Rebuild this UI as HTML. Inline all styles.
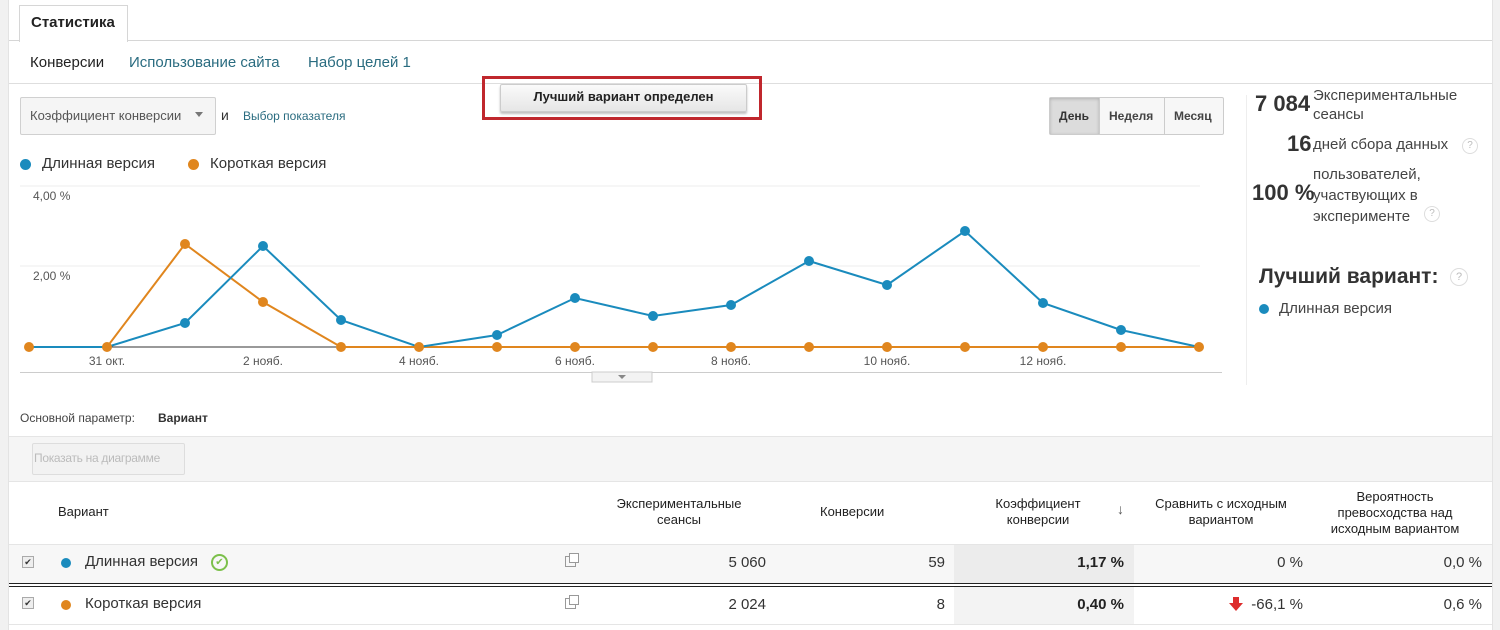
<!DOCTYPE html>
<html><head><meta charset="utf-8"><style>
body{margin:0;width:1500px;height:630px;overflow:hidden;background:#fff;font-family:"Liberation Sans",Arial,sans-serif;color:#333;position:relative}
.a{position:absolute;white-space:nowrap}
.n{display:inline-block}
</style></head><body>
<div class="a" style="left:0;top:0;width:8px;height:630px;background:#f1f1f1;border-right:1px solid #e3e3e3"></div>
<div class="a" style="left:1492px;top:0;width:8px;height:630px;background:#f1f1f1;border-left:1px solid #e3e3e3"></div>
<div class="a" style="left:9px;top:40px;width:1483px;height:1px;background:#d6d6d6"></div>
<div class="a" style="left:19px;top:5px;width:107px;height:36px;background:#fff;border:1px solid #d6d6d6;border-bottom:none"></div>
<div class="a" style="left:31px;top:14px;font-size:15px;font-weight:bold;color:#222">Статистика</div>
<div class="a" style="left:30px;top:54px;font-size:15px;color:#222">Конверсии</div>
<div class="a" style="left:129px;top:54px;font-size:15px;color:#2a6c80">Использование сайта</div>
<div class="a" style="left:308px;top:54px;font-size:15px;color:#2a6c80">Набор целей 1</div>
<div class="a" style="left:9px;top:83px;width:1483px;height:1px;background:#dedede"></div>
<div class="a" style="left:482px;top:76px;width:274px;height:38px;border:3px solid #c0272d"></div>
<div class="a" style="left:500px;top:84px;width:245px;height:26px;background:linear-gradient(#fafafa,#e6e6e6);border:1px solid #ccc;border-radius:2px;box-shadow:0 2px 2px rgba(0,0,0,.25);text-align:center;line-height:24px;font-size:13px;font-weight:bold;color:#222">Лучший вариант определен</div>
<div class="a" style="left:20px;top:97px;width:194px;height:36px;border:1px solid #d0d0d0;border-radius:2px;background:#f5f5f5"></div>
<div class="a" style="left:30px;top:108px;font-size:13px;color:#555">Коэффициент конверсии</div>
<div class="a" style="left:195px;top:112px;width:0;height:0;border-left:4px solid transparent;border-right:4px solid transparent;border-top:5px solid #777"></div>
<div class="a" style="left:221px;top:107px;font-size:14px;color:#333">и</div>
<div class="a" style="left:243px;top:109px;font-size:12px;color:#2a6c80">Выбор показателя</div>
<div class="a" style="left:1049px;top:97px;width:173px;height:36px;border:1px solid #ccc;border-radius:2px;background:#f7f7f7"></div>
<div class="a" style="left:1050px;top:98px;width:49px;height:36px;background:#dcdcdc;box-shadow:inset 0 1px 3px rgba(0,0,0,.2)"></div>
<div class="a" style="left:1099px;top:98px;width:1px;height:36px;background:#ccc"></div>
<div class="a" style="left:1164px;top:98px;width:1px;height:36px;background:#ccc"></div>
<div class="a" style="left:1059px;top:109px;font-size:12px;font-weight:bold;color:#333">День</div>
<div class="a" style="left:1109px;top:109px;font-size:12px;font-weight:bold;color:#444">Неделя</div>
<div class="a" style="left:1174px;top:109px;font-size:12px;font-weight:bold;color:#444">Месяц</div>
<div class="a" style="left:20px;top:159px;width:11px;height:11px;border-radius:50%;background:#1a8bbd"></div>
<div class="a" style="left:42px;top:155px;font-size:15px;color:#333">Длинная версия</div>
<div class="a" style="left:188px;top:159px;width:11px;height:11px;border-radius:50%;background:#e0861e"></div>
<div class="a" style="left:210px;top:155px;font-size:15px;color:#333">Короткая версия</div>
<svg class="a" style="left:0;top:180px" width="1240" height="205" viewBox="0 180 1240 205">
<line x1="20" y1="186" x2="1200" y2="186" stroke="#eee"/>
<line x1="20" y1="266" x2="1200" y2="266" stroke="#eee"/>
<line x1="20" y1="372.5" x2="1222" y2="372.5" stroke="#ccc"/>
<line x1="29" y1="347" x2="1199" y2="347" stroke="#333" stroke-width="1"/>
<text x="33" y="200" font-size="12" fill="#555" font-family="Liberation Sans">4,00 %</text>
<text x="33" y="280" font-size="12" fill="#555" font-family="Liberation Sans">2,00 %</text>
<g font-size="12" fill="#555" font-family="Liberation Sans" text-anchor="middle">
<text x="107" y="365">31 окт.</text><text x="263" y="365">2 нояб.</text><text x="419" y="365">4 нояб.</text><text x="575" y="365">6 нояб.</text><text x="731" y="365">8 нояб.</text><text x="887" y="365">10 нояб.</text><text x="1043" y="365">12 нояб.</text></g>
<polyline fill="none" stroke="#e0861e" stroke-width="2" points="29,347 107,347 185,244 263,302 341,347 419,347 497,347 575,347 653,347 731,347 809,347 887,347 965,347 1043,347 1121,347 1199,347"/>
<polyline fill="none" stroke="#1a8bbd" stroke-width="2" points="29,347 107,347 185,323 263,246 341,320 419,347 497,335 575,298 653,316 731,305 809,261 887,285 965,231 1043,303 1121,330 1199,347"/>
<g fill="#e0861e"><circle cx="29" cy="347" r="5"/><circle cx="107" cy="347" r="5"/><circle cx="185" cy="244" r="5"/><circle cx="263" cy="302" r="5"/><circle cx="341" cy="347" r="5"/><circle cx="419" cy="347" r="5"/><circle cx="497" cy="347" r="5"/><circle cx="575" cy="347" r="5"/><circle cx="653" cy="347" r="5"/><circle cx="731" cy="347" r="5"/><circle cx="809" cy="347" r="5"/><circle cx="887" cy="347" r="5"/><circle cx="965" cy="347" r="5"/><circle cx="1043" cy="347" r="5"/><circle cx="1121" cy="347" r="5"/><circle cx="1199" cy="347" r="5"/></g>
<g fill="#1a8bbd"><circle cx="185" cy="323" r="5"/><circle cx="263" cy="246" r="5"/><circle cx="341" cy="320" r="5"/><circle cx="497" cy="335" r="5"/><circle cx="575" cy="298" r="5"/><circle cx="653" cy="316" r="5"/><circle cx="731" cy="305" r="5"/><circle cx="809" cy="261" r="5"/><circle cx="887" cy="285" r="5"/><circle cx="965" cy="231" r="5"/><circle cx="1043" cy="303" r="5"/><circle cx="1121" cy="330" r="5"/></g>
<rect x="592" y="372" width="60" height="10" fill="#f3f3f3" stroke="#ccc"/>
<path d="M618 375 L626 375 L622 379 Z" fill="#888"/>
</svg>
<div class="a" style="left:1246px;top:95px;width:1px;height:290px;background:#eee"></div>
<div class="a" style="left:1255px;top:91px;font-size:22px;font-weight:bold;color:#333">7 084</div>
<div class="a" style="left:1313px;top:86px;font-size:15px;line-height:19px;color:#444">Экспериментальные<br>сеансы</div>
<div class="a" style="left:1287px;top:131px;font-size:22px;font-weight:bold;color:#333">16</div>
<div class="a" style="left:1313px;top:136px;font-size:15px;color:#444">дней сбора данных</div>
<div class="a" style="left:1462px;top:138px;width:14px;height:14px;border:1px solid #ddd;border-radius:50%;font-size:10px;color:#bbb;text-align:center;line-height:14px">?</div>
<div class="a" style="left:1252px;top:180px;font-size:22px;font-weight:bold;color:#333">100 %</div>
<div class="a" style="left:1313px;top:164px;font-size:15px;line-height:21px;color:#444">пользователей,<br>участвующих в<br>эксперименте</div>
<div class="a" style="left:1424px;top:206px;width:14px;height:14px;border:1px solid #ddd;border-radius:50%;font-size:10px;color:#bbb;text-align:center;line-height:14px">?</div>
<div class="a" style="left:1259px;top:265px;font-size:21px;font-weight:bold;color:#333">Лучший вариант:</div>
<div class="a" style="left:1450px;top:268px;width:16px;height:16px;border:1px solid #ddd;border-radius:50%;font-size:11px;color:#bbb;text-align:center;line-height:16px">?</div>
<div class="a" style="left:1259px;top:304px;width:10px;height:10px;border-radius:50%;background:#1a8bbd"></div>
<div class="a" style="left:1279px;top:300px;font-size:15px;color:#444">Длинная версия</div>
<div class="a" style="left:20px;top:411px;font-size:12px;color:#444">Основной параметр:</div>
<div class="a" style="left:158px;top:411px;font-size:12px;font-weight:bold;color:#333">Вариант</div>
<div class="a" style="left:9px;top:436px;width:1483px;height:44px;background:#f5f5f5;border-top:1px solid #e5e5e5;border-bottom:1px solid #e5e5e5"></div>
<div class="a" style="left:32px;top:443px;width:151px;height:30px;border:1px solid #ddd;border-radius:2px;background:#f2f2f2"></div>
<div class="a" style="left:34px;top:451px;font-size:12px;color:#bbb;letter-spacing:-.3px">Показать на диаграмме</div>
<div class="a" style="left:9px;top:544px;width:1483px;height:1px;background:#e5e5e5"></div>
<div class="a" style="left:58px;top:504px;font-size:13px;color:#222">Вариант</div>
<div class="a" style="left:598px;top:496px;width:162px;text-align:center;font-size:13px;line-height:16px;color:#222">Экспериментальные<br>сеансы</div>
<div class="a" style="left:820px;top:504px;font-size:13px;color:#222">Конверсии</div>
<div class="a" style="left:978px;top:496px;width:120px;text-align:center;font-size:13px;line-height:16px;color:#222">Коэффициент<br>конверсии</div>
<div class="a" style="left:1117px;top:501px;font-size:14px;color:#555">↓</div>
<div class="a" style="left:1140px;top:496px;width:162px;text-align:center;font-size:13px;line-height:16px;color:#222">Сравнить с исходным<br>вариантом</div>
<div class="a" style="left:1315px;top:489px;width:160px;text-align:center;font-size:13px;line-height:16px;color:#222">Вероятность<br>превосходства над<br>исходным вариантом</div>
<div class="a" style="left:9px;top:545px;width:1483px;height:38px;background:#f7f7f7"></div>
<div class="a" style="left:954px;top:545px;width:180px;height:38px;background:#ececec"></div>
<div class="a" style="left:9px;top:583px;width:1483px;height:1px;background:#222"></div>
<div class="a" style="left:9px;top:586px;width:1483px;height:1px;background:#222"></div>
<div class="a" style="left:954px;top:587px;width:180px;height:37px;background:#f3f3f3"></div>
<div class="a" style="left:9px;top:624px;width:1483px;height:1px;background:#e5e5e5"></div>
<div class="a" style="left:22px;top:556px;width:10px;height:10px;border:1px solid #aaa;background:#eee;font-size:9px;line-height:10px;text-align:center">✔</div>
<div class="a" style="left:22px;top:597px;width:10px;height:10px;border:1px solid #aaa;background:#eee;font-size:9px;line-height:10px;text-align:center">✔</div>
<div class="a" style="left:61px;top:558px;width:10px;height:10px;border-radius:50%;background:#1a8bbd"></div>
<div class="a" style="left:61px;top:600px;width:10px;height:10px;border-radius:50%;background:#e0861e"></div>
<div class="a" style="left:85px;top:553px;font-size:15px;color:#333">Длинная версия</div>
<div class="a" style="left:211px;top:554px;width:13px;height:13px;border:2px solid #7cc04b;border-radius:50%;color:#7cc04b;font-size:10px;line-height:13px;text-align:center">✔</div>
<div class="a" style="left:85px;top:595px;font-size:15px;color:#333">Короткая версия</div>
<div class="a" style="left:565px;top:556px;width:9px;height:9px;border:1px solid #999"></div>
<div class="a" style="left:569px;top:553px;width:8px;height:8px;border:1px solid #999;background:#fff"></div>
<div class="a" style="left:565px;top:598px;width:9px;height:9px;border:1px solid #999"></div>
<div class="a" style="left:569px;top:595px;width:8px;height:8px;border:1px solid #999;background:#fff"></div>
<div class="a" style="left:700px;top:554px;width:66px;text-align:right;font-size:15px;color:#333">5 060</div>
<div class="a" style="left:700px;top:596px;width:66px;text-align:right;font-size:15px;color:#333">2 024</div>
<div class="a" style="left:880px;top:554px;width:65px;text-align:right;font-size:15px;color:#333">59</div>
<div class="a" style="left:880px;top:596px;width:65px;text-align:right;font-size:15px;color:#333">8</div>
<div class="a" style="left:1040px;top:554px;width:84px;text-align:right;font-size:15px;font-weight:bold;color:#222">1,17 %</div>
<div class="a" style="left:1040px;top:596px;width:84px;text-align:right;font-size:15px;font-weight:bold;color:#222">0,40 %</div>
<div class="a" style="left:1220px;top:554px;width:83px;text-align:right;font-size:15px;color:#333">0 %</div>
<svg class="a" style="left:1229px;top:597px" width="14" height="14"><path d="M4 0h6v6h4l-7 8-7-8h4z" fill="#dd2c2c"/></svg>
<div class="a" style="left:1220px;top:596px;width:83px;text-align:right;font-size:15px;color:#333">-66,1 %</div>
<div class="a" style="left:1400px;top:554px;width:82px;text-align:right;font-size:15px;color:#333">0,0 %</div>
<div class="a" style="left:1400px;top:596px;width:82px;text-align:right;font-size:15px;color:#333">0,6 %</div>
</body></html>
